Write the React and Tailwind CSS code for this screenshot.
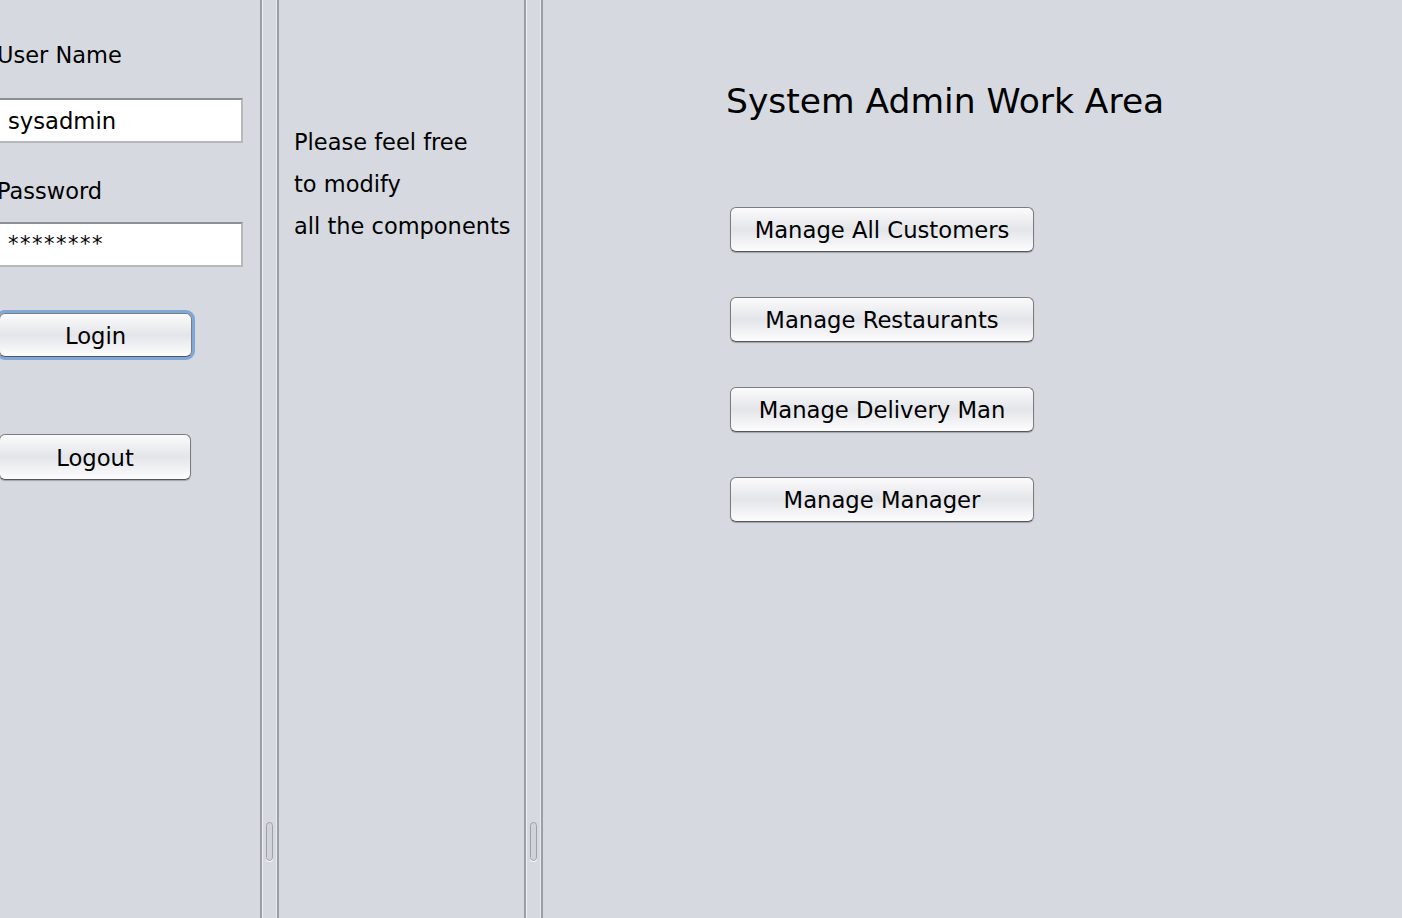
import React from "react";

const font = { fontFamily: '"DejaVu Sans", "Liberation Sans", sans-serif' };

function AquaButton({ children, className = "", focused = false }) {
  return (
    <div
      className={
        "flex items-center justify-center rounded-[6px] border border-[#7c7c80] border-b-[#55565a] bg-gradient-to-b from-[#fbfbfc] via-[#e4e5e9] to-[#fdfdfe] pt-[2px] text-black shadow-[0_1px_1px_rgba(0,0,0,0.25)] " +
        (focused ? "ring-[3px] ring-[#7da8d9] " : "") +
        className
      }
    >
      {children}
    </div>
  );
}

function Divider() {
  return (
    <div className="relative flex h-full w-[19px] shrink-0">
      <div className="w-[2px] bg-[#9c9ea5]" />
      <div className="w-px bg-[#f0f1f3]" />
      <div className="flex-1 bg-[#d6d9df]" />
      <div className="w-px bg-[#e9eaee]" />
      <div className="w-[2px] bg-[#9c9ea5]" />
      <div className="absolute left-[6px] top-[822px] h-[39px] w-[7px] rounded-full border border-[#9ea0a7] bg-[#d0d3d9] shadow-[0_1px_0_#ffffff]" />
    </div>
  );
}

export default function App() {
  return (
    <div
      className="flex h-[918px] w-[1402px] overflow-hidden bg-[#d6d9df] text-black"
      style={font}
    >
      {/* Left panel */}
      <div className="relative h-full w-[260px] shrink-0 overflow-hidden">
        <div className="ml-[-3px] flex flex-col">
          <div className="mt-[41px] h-[28px] text-[22.5px] leading-[28px]">User Name</div>
          <div className="mt-[29px] flex h-[45px] w-[246px] items-center border-[2px] border-[#b7b8bb] border-t-[#8e8f93] bg-white pl-[9px] pt-[2px] text-[22.7px]">
            sysadmin
          </div>
          <div className="mt-[34px] h-[28px] text-[22.5px] leading-[28px]">Password</div>
          <div className="mt-[17px] flex h-[45px] w-[246px] items-start border-[2px] border-[#b7b8bb] border-t-[#8e8f93] bg-white pl-[9px] pt-[9px] text-[21px] leading-[22px] tracking-[1.5px]">
            ********
          </div>
          <AquaButton focused className="ml-[2px] mt-[46px] h-[44px] w-[193px] text-[22.7px]">
            Login
          </AquaButton>
          <AquaButton className="ml-[2px] mt-[77px] h-[46px] w-[192px] text-[22.7px]">
            Logout
          </AquaButton>
        </div>
      </div>

      <Divider />

      {/* Middle panel */}
      <div className="h-full w-[245px] shrink-0 whitespace-nowrap pl-[15px] pt-[121px] text-[22.5px] leading-[42px]">
        <div>Please feel free</div>
        <div>to modify</div>
        <div>all the components</div>
      </div>

      <Divider />

      {/* Right panel */}
      <div className="flex h-full flex-1 flex-col">
        <div className="ml-[183px] mt-[79px] text-[34.5px] leading-[44px]">
          System Admin Work Area
        </div>
        <div className="ml-[187px] mt-[84px] flex flex-col gap-[45px]">
          <AquaButton className="h-[45px] w-[304px] text-[22.7px]">Manage All Customers</AquaButton>
          <AquaButton className="h-[45px] w-[304px] text-[22.7px]">Manage Restaurants</AquaButton>
          <AquaButton className="h-[45px] w-[304px] text-[22.7px]">Manage Delivery Man</AquaButton>
          <AquaButton className="h-[45px] w-[304px] text-[22.7px]">Manage Manager</AquaButton>
        </div>
      </div>
    </div>
  );
}
